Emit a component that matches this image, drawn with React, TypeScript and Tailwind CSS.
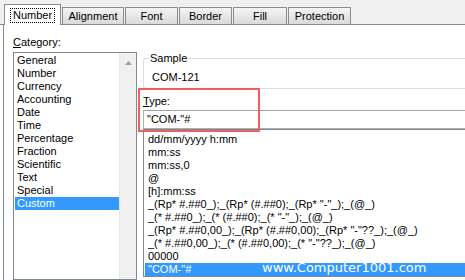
import React from 'react';

const categories = [
  'General',
  'Number',
  'Currency',
  'Accounting',
  'Date',
  'Time',
  'Percentage',
  'Fraction',
  'Scientific',
  'Text',
  'Special',
  'Custom',
];

const formats = [
  'dd/mm/yyyy h:mm',
  'mm:ss',
  'mm:ss,0',
  '@',
  '[h]:mm:ss',
  '_(Rp* #.##0_);_(Rp* (#.##0);_(Rp* "-"_);_(@_)',
  '_(* #.##0_);_(* (#.##0);_(* "-"_);_(@_)',
  '_(Rp* #.##0,00_);_(Rp* (#.##0,00);_(Rp* "-"??_);_(@_)',
  '_(* #.##0,00_);_(* (#.##0,00);_(* "-"??_);_(@_)',
  '00000',
  '"COM-"#',
];

const tabs = [
  { label: 'Alignment', w: 'w-[62px]' },
  { label: 'Font', w: 'w-[53px]' },
  { label: 'Border', w: 'w-[53px]' },
  { label: 'Fill', w: 'w-[54px]' },
  { label: 'Protection', w: 'w-[63px]' },
];

const App: React.FC = () => {
  return (
    <div className="relative w-[465px] h-[280px] overflow-hidden bg-white text-black text-[11px] font-['Liberation_Sans',Arial,sans-serif]">
      {/* Tab strip */}
      <div className="flex items-end h-[25px] pl-[4px] bg-[#f0f0f0] border-b border-[#898c95]">
        <div className="relative z-10 -mb-px h-[21px] w-[57px] bg-white border border-b-0 border-[#898c95] flex items-start justify-center pt-[3px]">
          <span className="border border-dotted border-black px-[2px] leading-[13px]">Number</span>
        </div>
        {tabs.map((t) => (
          <div
            key={t.label}
            className={`ml-[1px] h-[17px] ${t.w} border border-b-0 border-[#898c95] bg-gradient-to-b from-[#f4f4f4] to-[#dadada] flex items-center justify-center leading-[13px]`}
          >
            {t.label}
          </div>
        ))}
      </div>

      {/* Panel */}
      <div className="flex h-[255px] ml-[3px] border-l border-[#898c95]">
        {/* Category column */}
        <div className="w-[133px] pl-[9px] pt-[11px] flex flex-col">
          <div className="leading-[13px]">
            <span className="underline">C</span>ategory:
          </div>
          <div className="mt-[3px] flex h-[240px] w-[124px] border border-[#828790]">
            <div className="flex-1 pl-[1px] pt-[1px]">
              {categories.map((c) => (
                <div
                  key={c}
                  className={`h-[13px] leading-[13px] pl-[2px] ${c === 'Custom' ? 'bg-[#3399ff] text-white' : ''}`}
                >
                  {c}
                </div>
              ))}
            </div>
            <div className="w-[17px] bg-[#f0f0f0] border-l border-[#e8e8e8] flex justify-center pt-[8px]">
              <svg width="7" height="4" viewBox="0 0 7 4">
                <path d="M0 4 L3.5 0 L7 4 Z" fill="#a0a0a0" />
              </svg>
            </div>
          </div>
        </div>

        {/* Right column */}
        <div className="flex-1 pl-[6px] flex flex-col">
          <div className="relative mt-[33px] h-[31px] border border-r-0 border-[#d5dfe5] rounded-l-[3px]">
            <span className="absolute left-[5px] -top-[7px] bg-white px-[1px] leading-[13px]">Sample</span>
            <div className="pl-[8px] pt-[12px] leading-[13px]">COM-121</div>
          </div>
          <div className="mt-[6px] leading-[13px]">
            <span className="underline">T</span>ype:
          </div>
          <div className="mt-[2px] h-[19px] border border-r-0 border-[#abadb3] border-t-[#a0a0a0] pl-[3px] leading-[17px]">
            "COM-"#
          </div>
          <div className="border border-r-0 border-[#828790] pt-[3px] pl-[1px]">
            {formats.map((f, i) => (
              <div
                key={i}
                className={`h-[13px] leading-[13px] pl-[3px] whitespace-pre ${i === formats.length - 1 ? 'bg-[#3399ff] text-white' : ''}`}
              >
                {f}
              </div>
            ))}
          </div>
        </div>
      </div>

      {/* Annotation highlight around the Type box */}
      <div className="absolute left-[138px] top-[88px] w-[122px] h-[44px] border-2 border-[#ef5f5f]" />

      {/* Watermark */}
      <div className="absolute left-[262px] top-[260px] text-white text-[13px] leading-[16px] font-['DejaVu_Sans',Verdana,sans-serif]">
        www.Computer1001.com
      </div>
    </div>
  );
};

export default App;
